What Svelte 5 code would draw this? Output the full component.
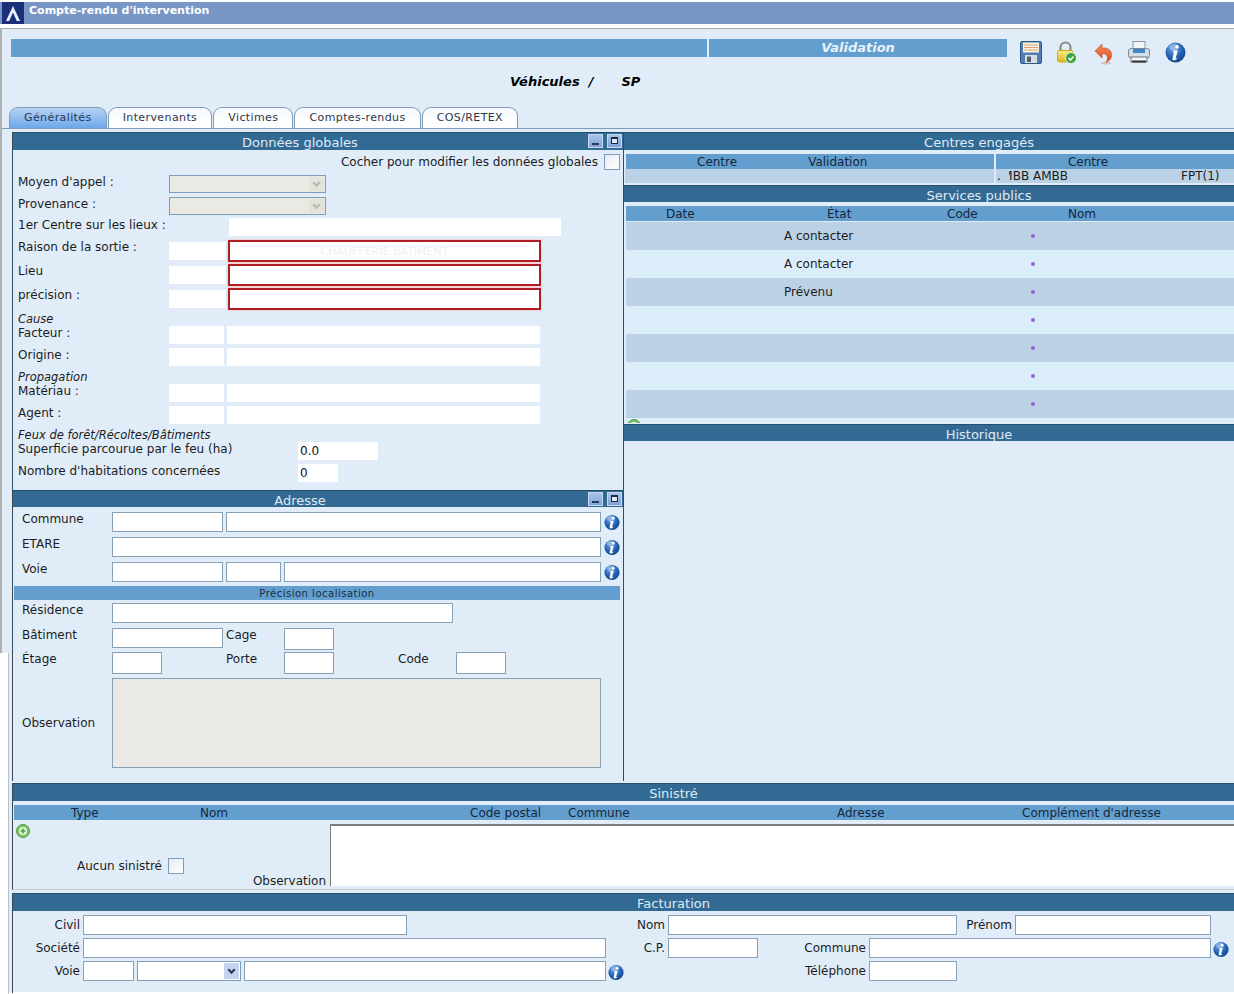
<script>
  const tabs = ['Généralités', 'Intervenants', 'Victimes', 'Comptes-rendus', 'COS/RETEX'];
  const services = [
    { etat: 'A contacter' },
    { etat: 'A contacter' },
    { etat: 'Prévenu' },
    { etat: '' },
    { etat: '' },
    { etat: '' },
    { etat: '' }
  ];
  const sinistreCols = ['Type', 'Nom', 'Code postal', 'Commune', 'Adresse', "Complément d'adresse"];
</script>

{#snippet info()}
  <svg class="info" viewBox="0 0 20 20" aria-hidden="true">
    <circle cx="10" cy="10" r="9.5" fill="url(#infoGrad)" />
    <ellipse cx="8.5" cy="5" rx="5" ry="3.4" fill="#fff" opacity="0.3" />
    <circle cx="11.4" cy="4.6" r="1.7" fill="#fff" />
    <path d="M8.2 8h4l-2 7.2c-.1.5.3.6.7.4l.8-.5-.2 1.1c-1 .8-2 1.2-3 1.2-1.200 0-1.700-.7-1.400-1.800l1.400-5.500-.9.1z" fill="#fff" />
  </svg>
{/snippet}

{#snippet plus()}
  <svg class="plus" viewBox="0 0 14 14" aria-hidden="true">
    <circle cx="7" cy="7" r="6.5" fill="#7cc063" stroke="#4f9b45" />
    <circle cx="7" cy="7" r="4" fill="#e4f4dc" />
    <path d="M7 4.500v5M4.500 7h5" stroke="#4f9b45" stroke-width="1.600" />
  </svg>
{/snippet}

{#snippet winButtons()}
  <div class="win-buttons">
    <span class="win-btn"><i class="min"></i></span>
    <span class="win-btn"><i class="max"></i></span>
  </div>
{/snippet}

{#snippet selectBox(disabled)}
  <div class="select" class:disabled>
    <span class="arrow">
      <svg viewBox="0 0 10 10" aria-hidden="true"><path d="M2 3l3 3 3-3" fill="none" stroke-width="2" /></svg>
    </span>
  </div>
{/snippet}

<div class="page">
  <svg class="defs" aria-hidden="true">
    <defs>
      <radialGradient id="infoGrad" cx="0.4" cy="0.3" r="0.8">
        <stop offset="0" stop-color="#6fa3e0" />
        <stop offset="0.6" stop-color="#1c5cb0" />
        <stop offset="1" stop-color="#123f80" />
      </radialGradient>
      <linearGradient id="lockGrad" x1="0" y1="0" x2="0" y2="1">
        <stop offset="0" stop-color="#f8ec80" />
        <stop offset="1" stop-color="#d8b820" />
      </linearGradient>
      <linearGradient id="undoGrad" x1="0" y1="0" x2="0" y2="1">
        <stop offset="0" stop-color="#f88a5c" />
        <stop offset="1" stop-color="#d84a1c" />
      </linearGradient>
    </defs>
  </svg>

  <header class="titlebar">
    <svg class="logo" viewBox="0 0 22 22" aria-hidden="true">
      <rect width="22" height="22" fill="#1b3078" />
      <path d="M4 19L11 4l7 15h-3.200L11 10.500 7.200 19z" fill="#e8f0ff" />
    </svg>
    <span>Compte-rendu d'intervention</span>
  </header>

  <div class="content">
    <div class="toolbar">
      <div class="bar-main"></div>
      <div class="bar-validation">Validation</div>
      <div class="tools">
        <svg class="tool save" viewBox="0 0 22 23" aria-hidden="true">
          <rect x="0.500" y="0.500" width="21" height="22" rx="1.500" fill="#4f7fb4" stroke="#2f5880" />
          <rect x="3" y="1.500" width="16" height="10" fill="#f4f1e6" />
          <path d="M4 4h14M4 6.500h14M4 9h14" stroke="#e0a070" stroke-width="1" />
          <rect x="5" y="14" width="12" height="8" fill="#d8dde2" />
          <rect x="7" y="15.500" width="4" height="5.500" fill="#50606e" />
        </svg>
        <svg class="tool lock" viewBox="0 0 21 23" aria-hidden="true">
          <path d="M4.500 10V6.500a5 5 0 0 1 10 0V10" fill="none" stroke="#8c8c88" stroke-width="2.200" />
          <rect x="1.500" y="9.500" width="15.500" height="11.500" rx="2" fill="url(#lockGrad)" stroke="#c8a818" />
          <circle cx="15" cy="17" r="5.500" fill="#3aa040" stroke="#e8f4e0" />
          <path d="M12.500 17l2 2 3-3.500" fill="none" stroke="#fff" stroke-width="1.600" />
        </svg>
        <svg class="tool undo" viewBox="0 0 19 22" aria-hidden="true">
          <ellipse cx="12" cy="20" rx="5" ry="1.500" fill="#c8c8c8" />
          <path d="M8 1L1 8l7 7v-4.200c3-.3 5 .7 5.500 3.200.4 2.400-.6 4-1.500 5.500 3.500-1.500 6-4.500 5.500-8.500C17 6.500 13 4.500 8 5z" fill="url(#undoGrad)" stroke="#c84818" stroke-width="0.600" />
        </svg>
        <svg class="tool print" viewBox="0 0 22 22" aria-hidden="true">
          <rect x="5" y="0.500" width="12" height="8" fill="#f4f6f8" stroke="#8a96a4" />
          <rect x="0.500" y="7.500" width="21" height="9.500" rx="2.500" fill="#d8dee6" stroke="#7c8896" />
          <rect x="5" y="8" width="12" height="4" fill="#3f86c8" />
          <rect x="3" y="16" width="16" height="5" fill="#f4f6f8" stroke="#6a7480" />
          <rect x="4" y="19.500" width="14" height="2" fill="#333" />
        </svg>
        <span class="tool tool-info">{@render info()}</span>
      </div>
    </div>

    <div class="vehicles"><span>Véhicules</span><span class="slash">/</span><span class="sp">SP</span></div>

    <nav class="tabs">
      {#each tabs as tab, i}
        <span class="tab" class:active={i === 0}>{tab}</span>
      {/each}
    </nav>

    <div class="main">
      <section class="left">
        <div class="head head-win">Données globales{@render winButtons()}</div>
        <div class="check-line">Cocher pour modifier les données globales <span class="checkbox"></span></div>

        <div class="row mt5"><label class="lbl-std">Moyen d'appel :</label>{@render selectBox(true)}</div>
        <div class="row mt4"><label class="lbl-std">Provenance :</label>{@render selectBox(true)}</div>
        <div class="row mt3"><label class="lbl-first">1er Centre sur les lieux :</label><input class="plain w332" /></div>

        <div class="row tall mt4"><label class="lbl-std">Raison de la sortie :</label><input class="plain w57 small-gap" /><input class="required" value="CHAUFFERIE BATIMENT" /></div>
        <div class="row tall mt2"><label class="lbl-std">Lieu</label><input class="plain w57 small-gap" /><input class="required" /></div>
        <div class="row tall mt2"><label class="lbl-std">précision :</label><input class="plain w57 small-gap" /><input class="required" /></div>

        <div class="group-title g-cause">Cause</div>
        <div class="row"><label class="lbl-std">Facteur :</label><input class="plain w55" /><input class="plain w313" /></div>
        <div class="row mt4"><label class="lbl-std">Origine :</label><input class="plain w55" /><input class="plain w313" /></div>

        <div class="group-title g-prop">Propagation</div>
        <div class="row"><label class="lbl-std">Matériau :</label><input class="plain w55" /><input class="plain w313" /></div>
        <div class="row mt4"><label class="lbl-std">Agent :</label><input class="plain w55" /><input class="plain w313" /></div>

        <div class="group-title g-feux">Feux de forêt/Récoltes/Bâtiments</div>
        <div class="row"><label class="lbl-wide">Superficie parcourue par le feu (ha)</label><input class="plain w80" value="0.0" /></div>
        <div class="row mt4"><label class="lbl-wide">Nombre d'habitations concernées</label><input class="plain w40" value="0" /></div>

        <div class="head head-win adresse">Adresse{@render winButtons()}</div>

        <div class="addr first"><label>Commune</label><input class="w111" /><input class="w375" />{@render info()}</div>
        <div class="addr"><label>ETARE</label><input class="w489" />{@render info()}</div>
        <div class="addr"><label>Voie</label><input class="w111" /><input class="w55" /><input class="w317" />{@render info()}</div>

        <div class="subbar">Précision localisation</div>

        <div class="addr res"><label>Résidence</label><input class="w341" /></div>
        <div class="addr res2"><label>Bâtiment</label><input class="w111" /><span class="lbl-cage">Cage</span><input class="w50 h22" /></div>
        <div class="addr res3"><label>Étage</label><input class="w50 h22" /><span class="lbl-porte">Porte</span><input class="w50 h22" /><span class="lbl-code">Code</span><input class="w50 h22" /></div>
        <div class="addr obs"><label>Observation</label><textarea disabled></textarea></div>
      </section>

      <section class="right">
        <div class="head">Centres engagés</div>
        <div class="centres">
          <div class="centre-col wide">
            <div class="sub centre-sub"><span class="c1">Centre</span><span class="c2">Validation</span></div>
            <div class="centre-row"></div>
          </div>
          <div class="centre-col">
            <div class="sub centre-sub2">Centre</div>
            <div class="centre-row engaged">
              <span class="dot-txt">.</span><span class="clip"><span>MBB AMBB</span></span><span class="fpt">FPT(1)</span>
            </div>
          </div>
        </div>

        <div class="head services">Services publics</div>
        <div class="sub service-sub">
          <span>Date</span><span>État</span><span>Code</span><span>Nom</span>
        </div>
        {#each services as s, i}
          <div class="service" class:odd={i % 2 === 0}>
            <span class="etat">{s.etat}</span><i class="bullet"></i>
          </div>
        {/each}
        <div class="clipped-plus">{@render plus()}</div>
        <div class="head historique">Historique</div>
      </section>
    </div>

    <section class="wide-panel sinistre">
      <div class="head wide-head">Sinistré</div>
      <div class="sub sin-sub">
        {#each sinistreCols as c}<span>{c}</span>{/each}
      </div>
      <div class="sin-body">
        <div class="sin-left">
          {@render plus()}
          <div class="aucun">Aucun sinistré <span class="checkbox"></span></div>
          <div class="obs-lbl">Observation</div>
        </div>
        <div class="sin-area"></div>
      </div>
    </section>

    <section class="wide-panel facturation">
      <div class="head wide-head">Facturation</div>
      <div class="f-row f-first">
        <label class="l70">Civil</label><input class="w324" />
        <label class="l261">Nom</label><input class="w289" />
        <label class="l58">Prénom</label><input class="w196" />
      </div>
      <div class="f-row">
        <label class="l70">Société</label><input class="w523" />
        <label class="l62">C.P.</label><input class="w90" />
        <label class="l111">Commune</label><input class="w342" />{@render info()}
      </div>
      <div class="f-row">
        <label class="l70">Voie</label><input class="w51" />
        <div class="f-select">{@render selectBox(false)}</div>
        <input class="w362" />{@render info()}
        <label class="l245">Téléphone</label><input class="w88" />
      </div>
    </section>
  </div>

  <div class="edge"></div>
</div>

<style>
  :global(body) {
    margin: 0;
    background: #fff;
  }

  .page {
    position: relative;
    width: 1234px;
    height: 994px;
    overflow: hidden;
    background: #fff;
    font-family: "DejaVu Sans", Verdana, sans-serif;
    font-size: 12px;
    line-height: 14px;
    color: #1c1c1c;
  }

  .defs {
    position: absolute;
    width: 0;
    height: 0;
  }

  .titlebar {
    display: flex;
    align-items: flex-start;
    height: 22px;
    margin-top: 2px;
    padding-left: 2px;
    background: #7897c6;
    color: #fff;
    font-size: 11px;
    font-weight: bold;
    line-height: 18px;
  }
  .logo {
    width: 22px;
    height: 22px;
    margin-right: 5px;
  }

  .content {
    height: 964px;
    margin-top: 4px;
    background: #e0edf8;
    border-top: 1px solid #a8a8a8;
    border-left: 2px solid #b0b0b0;
    box-sizing: border-box;
  }

  .toolbar {
    display: flex;
    align-items: flex-start;
    height: 35px;
    padding: 10px 0 0 9px;
    box-sizing: border-box;
  }
  .bar-main,
  .bar-validation {
    height: 18px;
    background: #629fce;
  }
  .bar-main { width: 696px; }
  .bar-validation {
    width: 298px;
    margin-left: 2px;
    color: #e8f2fa;
    font-size: 13px;
    font-weight: bold;
    font-style: italic;
    line-height: 18px;
    text-align: center;
  }
  .tools {
    display: flex;
    align-items: flex-start;
    margin-left: 13px;
    margin-top: 2px;
  }
  .tool { display: block; flex: none; }
  .save { width: 22px; height: 23px; }
  .lock { width: 21px; height: 23px; margin-left: 14px; }
  .undo { width: 19px; height: 22px; margin-left: 17px; margin-top: 2px; }
  .print { width: 22px; height: 22px; margin-left: 15px; }
  .tool-info { margin-left: 15px; }
  .tool-info :global(.info) { width: 21px; height: 23px; margin: 0; }

  .vehicles {
    display: flex;
    height: 43px;
    padding: 10px 0 0 508px;
    box-sizing: border-box;
    color: #000;
    font-size: 13px;
    font-weight: bold;
    font-style: italic;
    line-height: 16px;
  }
  .slash { margin-left: 9px; }
  .sp { margin-left: 28px; }

  .tabs {
    display: flex;
    gap: 1px;
    height: 22px;
    padding-left: 7px;
    border-bottom: 1px solid #7f9db9;
    box-sizing: border-box;
  }
  .tab {
    padding: 3px 14px 0;
    background: linear-gradient(#f6fafe, #ffffff);
    border: 1px solid #7f9db9;
    border-bottom: none;
    border-radius: 9px 9px 0 0;
    color: #303848;
    font-size: 11px;
    letter-spacing: 0.4px;
    line-height: 14px;
  }
  .tab.active {
    background: linear-gradient(#b4d2f4, #6ea8ea);
    color: #263a58;
  }

  .main {
    display: grid;
    grid-template-columns: 612px 1fr;
    height: 649px;
    margin: 3px 0 0 10px;
  }

  .left {
    border-left: 1px solid #3c4a56;
    border-right: 1px solid #3c4a56;
    box-sizing: border-box;
    width: 612px;
  }

  .head {
    position: relative;
    height: 18px;
    padding-left: 100px;
    background: #336a94;
    border-top: 1px solid #24506f;
    box-sizing: border-box;
    color: #dfeaf4;
    font-size: 13px;
    line-height: 19px;
    text-align: center;
  }
  .head-win {
    padding-left: 0;
    padding-right: 36px;
  }
  .win-buttons {
    position: absolute;
    top: 1px;
    right: 1px;
    display: flex;
    gap: 4px;
  }
  .win-btn {
    position: relative;
    width: 15px;
    height: 14px;
    background: linear-gradient(#a9c4e8, #7fa4d8);
    border: 1px solid #c8d8ee;
    box-sizing: border-box;
  }
  .win-btn i {
    position: absolute;
    display: block;
    box-sizing: border-box;
  }
  .win-btn .min {
    left: 3px;
    bottom: 2px;
    width: 7px;
    height: 2px;
    background: #2a3a58;
  }
  .win-btn .max {
    left: 3px;
    top: 2px;
    width: 7px;
    height: 7px;
    border: 1px solid #1c2a44;
    border-top-width: 2px;
    background: #dfe8f4;
  }

  .check-line {
    display: flex;
    align-items: center;
    justify-content: flex-end;
    gap: 6px;
    height: 16px;
    margin-top: 4px;
    padding-right: 3px;
  }
  .checkbox {
    display: inline-block;
    flex: none;
    width: 16px;
    height: 16px;
    background: linear-gradient(135deg, #e6ecf2, #ffffff);
    border: 1px solid #7f9db9;
    box-sizing: border-box;
  }

  .row {
    display: flex;
    height: 18px;
    padding-left: 5px;
  }
  .row.tall {
    height: 22px;
    align-items: flex-start;
  }
  .mt2 { margin-top: 2px; }
  .mt3 { margin-top: 3px; }
  .mt4 { margin-top: 4px; }
  .mt5 { margin-top: 5px; }

  label { flex: none; }
  .lbl-std { width: 151px; }
  .lbl-first { width: 211px; }
  .lbl-wide { width: 280px; }

  input {
    display: block;
    flex: none;
    height: 20px;
    margin: 0;
    padding: 0 2px;
    background: #fff;
    border: 1px solid #87a0b5;
    border-radius: 0;
    box-sizing: border-box;
    font: inherit;
    color: #111;
    outline: none;
  }
  input.plain {
    height: 18px;
    border: none;
  }
  input.required {
    width: 313px;
    height: 22px;
    margin-left: 2px;
    background: #fff;
    border: 2px solid #b01c24;
    box-shadow: 0 0 0 1px #f4d4d6;
    color: #f0f0f2;
    font-size: 11px;
    text-align: center;
  }
  input.small-gap { margin-top: 2px; }

  .w40 { width: 40px; }
  .w50 { width: 50px; }
  .w51 { width: 51px; }
  .w55 { width: 55px; margin-right: 3px; }
  .w57 { width: 57px; }
  .w80 { width: 80px; }
  .w88 { width: 88px; }
  .w90 { width: 90px; }
  .w111 { width: 111px; }
  .w196 { width: 196px; }
  .w289 { width: 289px; }
  .w313 { width: 313px; }
  .w317 { width: 317px; }
  .w324 { width: 324px; }
  .w332 { width: 332px; }
  .w341 { width: 341px; }
  .w342 { width: 342px; }
  .w362 { width: 362px; }
  .w375 { width: 375px; }
  .w489 { width: 489px; }
  .w523 { width: 523px; }
  .h22 { height: 22px; }

  .select {
    position: relative;
    width: 157px;
    height: 18px;
    background: #fff;
    border: 1px solid #7f9db9;
    box-sizing: border-box;
  }
  .select.disabled { background: #ebe9e3; }
  .arrow {
    position: absolute;
    top: 1px;
    right: 1px;
    bottom: 1px;
    width: 15px;
    display: flex;
    align-items: center;
    justify-content: center;
    background: #c4d4ee;
  }
  .arrow svg {
    width: 11px;
    height: 11px;
    stroke: #2a3e6a;
  }
  .select.disabled .arrow { background: #e2e2da; }
  .select.disabled .arrow svg { stroke: #b8b8b0; }

  .group-title {
    height: 14px;
    padding-left: 5px;
    font-style: italic;
    font-size: 11.5px;
  }
  .g-cause { margin-top: 2px; }
  .g-prop { margin-top: 4px; }
  .g-feux { margin-top: 4px; }
  .g-cause, .g-prop, .g-feux { padding-top: 0; }

  .adresse { margin-top: 8px; height: 17px; }

  .addr {
    display: flex;
    align-items: flex-start;
    gap: 3px;
    margin-top: 5px;
    padding-left: 9px;
  }
  .addr.first { margin-top: 5px; }
  .addr label {
    width: 87px;
    margin-right: 0;
  }
  .addr input { flex: none; }
  .addr .w55 { margin-right: 0; }
  .info {
    display: block;
    flex: none;
    width: 16px;
    height: 17px;
    margin: 2px 0 0 -1px;
  }
  .addr .info { margin-left: 0; }

  .subbar {
    width: 606px;
    height: 14px;
    margin: 4px 0 0 1px;
    background: #629fce;
    color: #1a2c44;
    font-size: 10px;
    letter-spacing: 0.5px;
    line-height: 15px;
    text-align: center;
  }

  .res { margin-top: 3px; }
  .res2 { margin-top: 5px; }
  .res3 { margin-top: 2px; }
  .lbl-cage { width: 55px; }
  .lbl-porte { width: 55px; margin-left: 61px; }
  .lbl-code { width: 55px; margin-left: 61px; }
  .obs { margin-top: 4px; }
  .obs label { align-self: center; }
  textarea {
    display: block;
    width: 489px;
    height: 90px;
    margin: 0;
    background: #ebe9e3;
    border: 1px solid #87a0b5;
    box-sizing: border-box;
    resize: none;
  }

  .sub {
    height: 15px;
    background: #629fce;
    color: #16263c;
    line-height: 16px;
  }

  .centres {
    display: grid;
    grid-template-columns: 370px 238px;
    gap: 2px;
    margin-top: 4px;
    background: #e0edf8;
  }
  .centre-sub {
    display: flex;
    margin-left: 2px;
  }
  .c1 { margin-left: 71px; }
  .c2 { margin-left: 71px; }
  .centre-sub2 {
    padding-right: 54px;
    text-align: center;
  }
  .centre-row {
    height: 14px;
    background: #bbd2e6;
  }
  .wide .centre-row { margin-left: 1px; }
  .engaged {
    display: flex;
    padding-left: 1px;
    line-height: 14px;
  }
  .dot-txt { width: 12px; }
  .clip {
    display: flex;
    justify-content: flex-end;
    width: 59px;
    overflow: hidden;
    white-space: nowrap;
  }
  .fpt { margin-left: 113px; }

  .services { margin-top: 2px; height: 17px; }
  .service-sub {
    display: grid;
    grid-template-columns: 161px 120px 121px 1fr;
    margin: 4px 0 1px 2px;
    padding-left: 40px;
  }
  .service {
    position: relative;
    height: 28px;
    margin-left: 2px;
    background: #dcedfa;
  }
  .service.odd { background: #bbd2e6; }
  .etat {
    position: absolute;
    left: 158px;
    top: 7px;
  }
  .bullet {
    position: absolute;
    left: 405px;
    top: 12px;
    width: 4px;
    height: 4px;
    border-radius: 50%;
    background: #9a60d8;
  }
  .clipped-plus {
    height: 4px;
    margin: 1px 0 0 3px;
    overflow: hidden;
  }
  .historique { margin-top: 1px; height: 17px; }

  .wide-panel {
    margin-left: 10px;
    border-left: 1px solid #3c4a56;
  }
  .wide-head {
    padding-left: 100px;
  }
  .sinistre {
    height: 107px;
    margin-top: 2px;
    box-sizing: border-box;
    border-bottom: 1px solid #c4ccd4;
    background: #e0edf8;
  }
  .sin-sub {
    display: grid;
    grid-template-columns: 129px 270px 98px 269px 185px 1fr;
    margin: 4px 0 0 1px;
    padding-left: 57px;
    white-space: nowrap;
  }
  .sin-body {
    display: flex;
    margin-top: 4px;
  }
  .sin-left {
    flex: none;
    width: 317px;
    height: 66px;
  }
  .plus {
    display: block;
    width: 14px;
    height: 14px;
  }
  .sin-left .plus { margin-left: 3px; }
  .aucun {
    display: flex;
    align-items: center;
    gap: 6px;
    margin-top: 20px;
    padding-left: 64px;
  }
  .obs-lbl {
    margin-top: 0;
    padding-right: 4px;
    text-align: right;
  }
  .sin-area {
    flex: 1;
    height: 62px;
    background: #fff;
    border-top: 2px solid #7e7e7e;
    border-left: 1px solid #7e7e7e;
    box-sizing: border-box;
  }

  .facturation {
    height: 100px;
    margin-top: 3px;
    box-sizing: border-box;
  }
  .f-row {
    display: flex;
    align-items: center;
    height: 20px;
    margin-top: 3px;
  }
  .f-first { margin-top: 4px; }
  .f-row label {
    padding-right: 3px;
    box-sizing: border-box;
    text-align: right;
  }
  .f-row .info { margin: 2px 0 0 2px; }
  .l58 { width: 58px; }
  .l62 { width: 62px; }
  .l70 { width: 70px; }
  .l111 { width: 111px; }
  .l245 { width: 245px; }
  .l261 { width: 261px; }
  .f-select {
    width: 104px;
    margin: 0 3px;
  }
  .f-select .select,
  .f-select :global(.select) {
    width: 104px;
    height: 20px;
  }

  /* white corner where the window ends, sits over the page edge */
  .edge {
    position: absolute;
    left: 0;
    top: 653px;
    bottom: 0;
    width: 8px;
    background: #fff;
    border-right: 1px solid #b8c0c8;
  }
</style>
